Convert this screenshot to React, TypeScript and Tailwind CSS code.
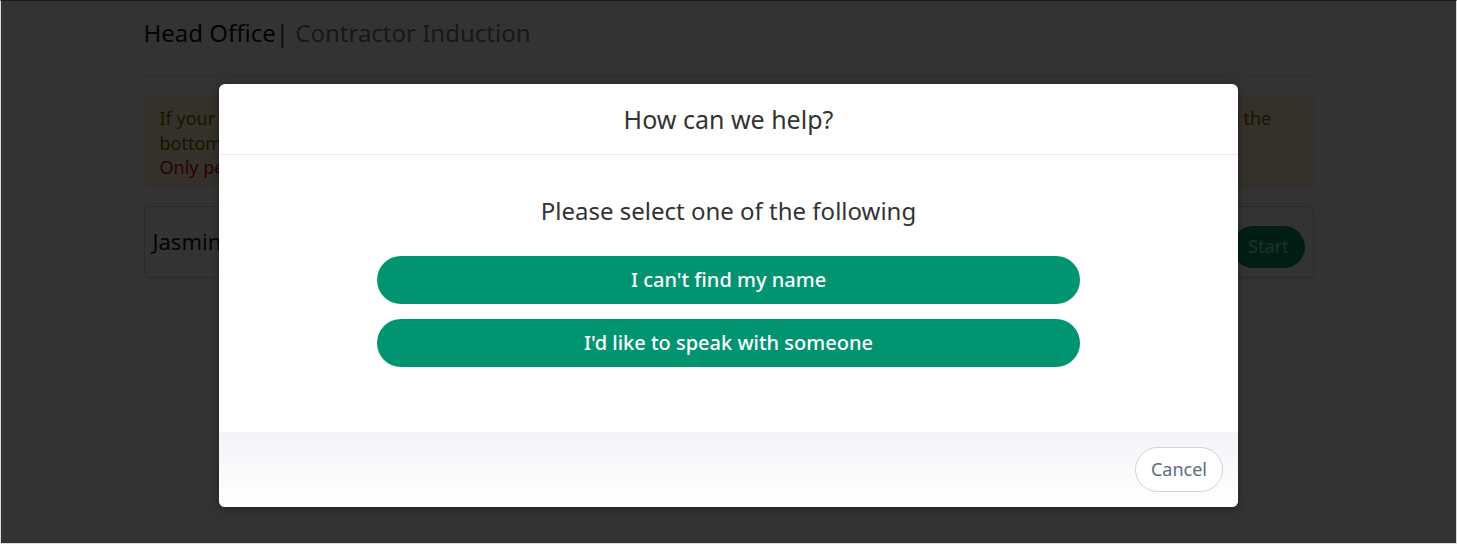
import React from "react";

const font = { fontFamily: '"Noto Sans", "Open Sans", sans-serif' };

function BackgroundPage() {
  return (
    <div className="w-[1170px] mx-auto">
      <div className="pt-[16px] pb-[26px] border-b border-gray-200 text-[24px] leading-[32px]">
        <span className="text-gray-900">Head Office</span>
        <span className="text-gray-700">|</span>
        <span className="text-[#6f7a8a]"> Contractor Induction</span>
      </div>
      <div className="mt-5 bg-[#fff3cd] border border-[#fbeec3] rounded px-[15px] pt-[9px] pb-[6px] text-[18px] leading-[24.5px] overflow-hidden">
        <p className="text-[#856404] whitespace-nowrap">
          If your name is not shown in the list below or some of your details are incorrect, please press the help button which is located at the
          <br />
          bottom of the screen.
        </p>
        <p className="text-[#c8102e]">Only people who have been invited by the site can complete this induction.</p>
      </div>
      <div className="mt-[19px] border border-gray-300 rounded flex justify-between pl-[8px] pr-[8px] h-[72px]">
        <span className="text-[22px] text-gray-900 self-center">Jasmine Taylor</span>
        <button className="mt-[19px] h-[42px] px-[16px] rounded-full bg-[#009470] text-[18px] text-white/70">Start</button>
      </div>
    </div>
  );
}

function HelpModal() {
  return (
    <div className="w-[1019px] bg-white rounded-[6px] shadow-[0_2px_8px_rgba(0,0,0,0.35)] overflow-hidden">
      <div className="h-[71px] border-b border-[#e9ecef] flex items-center justify-center">
        <h2 className="text-[25px] text-[#333] pt-[1px]">How can we help?</h2>
      </div>
      <div className="flex flex-col items-center pt-[39px] pb-[65px]">
        <p className="text-[24px] text-[#333] leading-[33px]">Please select one of the following</p>
        <div className="mt-[29px] w-[703px] flex flex-col gap-[15px]">
          <button className="h-[48px] rounded-full bg-[#009470] text-white text-[20px] font-medium">
            I can't find my name
          </button>
          <button className="h-[48px] rounded-full bg-[#009470] text-white text-[20px] font-medium">
            I'd like to speak with someone
          </button>
        </div>
      </div>
      <div className="h-[75px] bg-gradient-to-b from-[#f4f4f8] to-white flex items-center justify-end pr-[15px]">
        <button className="h-[45px] px-[15px] rounded-full border border-[#cdd6dc] bg-white text-[18px] text-[#5b6b80]">
          Cancel
        </button>
      </div>
    </div>
  );
}

export default function App() {
  return (
    <div style={font} className="relative h-[544px] overflow-hidden bg-white border-t border-t-[#1c1c1c] border-x border-x-[#d9d9d9] border-b border-b-[#d9d9d9]">
      <BackgroundPage />
      <div className="absolute inset-0 bg-black/80 flex items-start justify-center pt-[83px]">
        <HelpModal />
      </div>
    </div>
  );
}
